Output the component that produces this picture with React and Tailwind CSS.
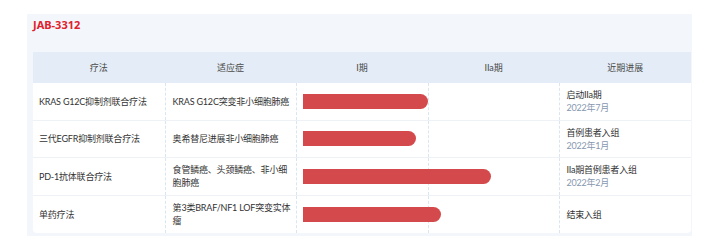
const rows = [
  {
    therapy: "KRAS G12C抑制剂联合疗法",
    indication: "KRAS G12C突变非小细胞肺癌",
    bar: "w-[125px]",
    status: "启动IIa期",
    date: "2022年7月",
  },
  {
    therapy: "三代EGFR抑制剂联合疗法",
    indication: "奥希替尼进展非小细胞肺癌",
    bar: "w-[113px]",
    status: "首例患者入组",
    date: "2022年1月",
  },
  {
    therapy: "PD-1抗体联合疗法",
    indication: "食管鳞癌、头颈鳞癌、非小细胞肺癌",
    bar: "w-[188px]",
    status: "IIa期首例患者入组",
    date: "2022年2月",
  },
  {
    therapy: "单药疗法",
    indication: "第3类BRAF/NF1 LOF突变实体瘤",
    bar: "w-[138px]",
    status: "结束入组",
  },
];

const headers = ["疗法", "适应症", "I期", "IIa期", "近期进展"];

export default function App() {
  return (
    <div className="w-[714px] h-[241px] bg-white pt-[14px] pl-[27px] font-['Lato','Noto_Sans_CJK_SC',sans-serif]">
      <div className="w-[665px] bg-[#f3f7fc] pl-[6px] pr-[1px] pb-[3px]">
        <div className="h-[38px] pt-[3px] text-[11px] leading-[16px] font-bold text-[#e0202b] font-['Noto_Sans',sans-serif]">
          JAB-3312
        </div>
        <div className="bg-white rounded-b-[4px]">
          <div className="grid grid-cols-5 h-[31px] bg-[#e4edf7] text-[9px] text-[#4a4a4a]">
            {headers.map((h) => (
              <div key={h} className="flex items-center justify-center">
                {h}
              </div>
            ))}
          </div>
          {rows.map((r, i) => (
            <div
              key={r.therapy}
              className={`grid grid-cols-5 h-[37.5px] text-[9px] leading-[13px] tracking-[-0.2px] text-[#333] ${
                i < rows.length - 1 ? "border-b border-[#eef2f7]" : ""
              }`}>
              <div className="flex items-center px-[6px]">{r.therapy}</div>
              <div className="flex items-center pl-[7px] pr-[2px] border-l border-dashed border-[#d9e5f1]">
                {r.indication}
              </div>
              <div className="flex items-center pl-[6px] border-l border-dashed border-[#d9e5f1]">
                <div className={`relative shrink-0 h-[15px] ${r.bar} bg-[#d44a4c] rounded-r-full`} />
              </div>
              <div className="border-l border-dashed border-[#d9e5f1]" />
              <div className="flex flex-col justify-center px-[6px] border-l border-dashed border-[#d9e5f1]">
                <div>{r.status}</div>
                {r.date && <div className="text-[#8797b0]">{r.date}</div>}
              </div>
            </div>
          ))}
        </div>
      </div>
    </div>
  );
}
